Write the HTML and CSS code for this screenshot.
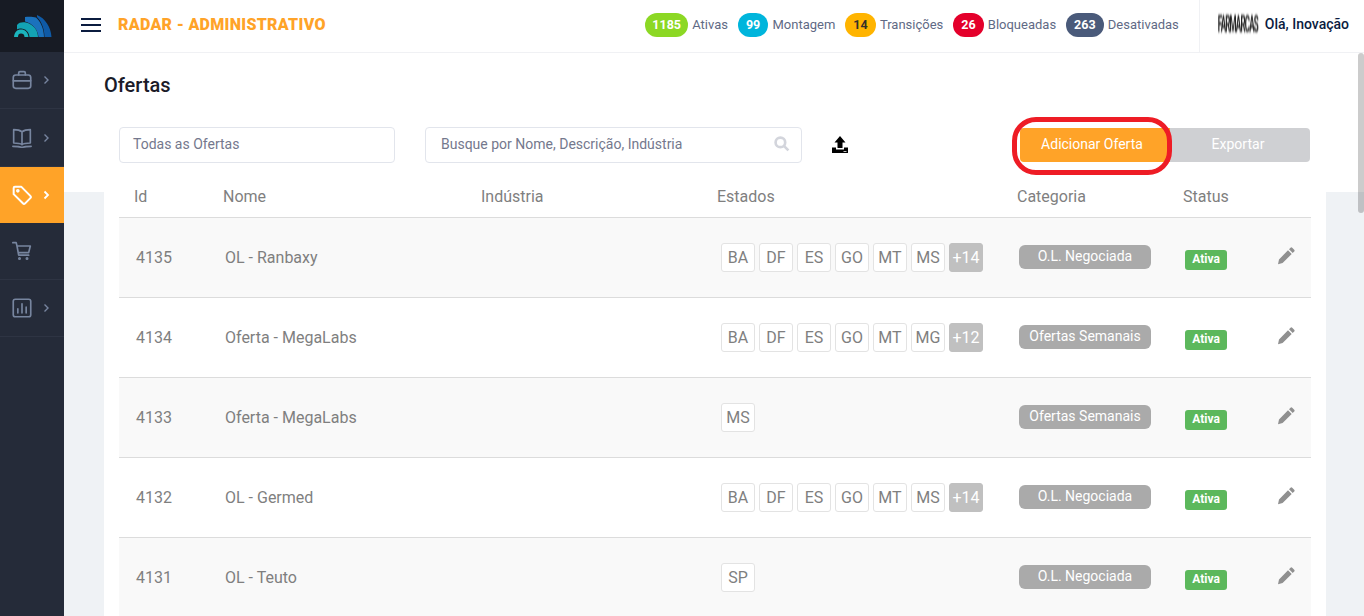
FILE: index.html
```html
<!DOCTYPE html>
<html lang="pt-BR">
<head>
    <meta charset="UTF-8">
    <meta name="viewport" content="width=device-width, initial-scale=1.0">
    <title>Radar - Administrativo</title>
    <link rel="stylesheet" href="styles.css">
</head>
<body>
    <div class="app">
        <!-- menu lateral -->
        <aside class="side_bar">
            <div class="side_logo">
                <svg width="38" height="23" viewBox="0 0 38 23">
                    <path d="M23 0C31 3 37 12 37.500 22H30.500C30.500 13 27 6 23 2Z" fill="#0f5aa6"/>
                    <path d="M11 2C14 1.500 19 1.500 22 2.500C26 6 30 13 30 22H24.500C24 15 19 8.500 11 6.500Z" fill="#1b72bd"/>
                    <path d="M3 10C5 7 9 7 12 7.500C19 9 24 15 24 22H15.500C15 17 11.500 13.500 7 13.500C5.500 13.500 4 13.800 3 14.500Z" fill="#13a3b4"/>
                    <path d="M0 22C.5 17 3 14.500 7 14.500C11 14.500 14 17 14.500 22H10.500C10.500 19.500 9 18.500 7 18.500C5 18.500 4 19.500 4 22Z" fill="#1bb5bd"/>
                </svg>
            </div>
            <a class="side_item">
                <svg class="side_icon" viewBox="0 0 24 24"><rect x="1.500" y="6" width="21" height="16" rx="3"/><path d="M8 6V3.500A1.500 1.500 0 0 1 9.500 2h5A1.500 1.500 0 0 1 16 3.500V6M1.500 13h21"/></svg>
                <svg class="side_arrow" viewBox="0 0 8 10"><path d="M2.500 1.500 6 5 2.500 8.500"/></svg>
            </a>
            <a class="side_item side_item_tall">
                <svg class="side_icon" viewBox="0 0 24 24"><path d="M12 4.500C10 3 6 2 2 2v16c4 0 8 .5 10 2 2-1.500 6-2 10-2V2c-4 0-8 1-10 2.500ZM12 4.500V20M1 22c4 0 8 0 11 1.500C15 22 19 22 23 22"/></svg>
                <svg class="side_arrow" viewBox="0 0 8 10"><path d="M2.500 1.500 6 5 2.500 8.500"/></svg>
            </a>
            <a class="side_item side_item_active">
                <svg class="side_icon" viewBox="0 0 24 24"><path d="M2 3.500A1.500 1.500 0 0 1 3.500 2H11l11 11a2 2 0 0 1 0 2.800L15.800 22a2 2 0 0 1-2.800 0L2 11Z"/><circle cx="7" cy="7" r="1"/></svg>
                <svg class="side_arrow" viewBox="0 0 8 10"><path d="M2.500 1.500 6 5 2.500 8.500"/></svg>
            </a>
            <a class="side_item">
                <svg class="side_icon" viewBox="0 0 24 24"><path d="M1 2h4l1 4 2 11h12M6 6h16l-2 8H7.500"/><circle cx="9" cy="21" r=".8"/><circle cx="18" cy="21" r=".8"/></svg>
            </a>
            <a class="side_item">
                <svg class="side_icon" viewBox="0 0 24 24"><rect x="1.500" y="1.500" width="21" height="21" rx="2.500"/><path d="M7 18v-5M12 18V7M17 18v-7"/></svg>
                <svg class="side_arrow" viewBox="0 0 8 10"><path d="M2.500 1.500 6 5 2.500 8.500"/></svg>
            </a>
        </aside>

        <div class="main_area">
            <!-- topo -->
            <header class="top_bar">
                <button class="menu_btn"><span></span><span></span><span></span></button>
                <h1 class="top_title">RADAR - ADMINISTRATIVO</h1>
                <div class="top_stats">
                    <span class="stat_num stat_green">1185</span><span class="stat_label">Ativas</span>
                    <span class="stat_num stat_blue">99</span><span class="stat_label">Montagem</span>
                    <span class="stat_num stat_yellow">14</span><span class="stat_label">Transições</span>
                    <span class="stat_num stat_red">26</span><span class="stat_label">Bloqueadas</span>
                    <span class="stat_num stat_navy">263</span><span class="stat_label">Desativadas</span>
                </div>
                <div class="top_user">
                    <span class="user_logo">FARMARCAS</span>
                    <span class="user_name">Olá, Inovação</span>
                </div>
            </header>

            <div class="content">
                <section class="card">
                    <h2 class="page_title">Ofertas</h2>
                    <div class="tool_bar">
                        <div class="field field_select">Todas as Ofertas</div>
                        <div class="field field_search">
                            <span>Busque por Nome, Descrição, Indústria</span>
                            <svg width="16" height="16" viewBox="0 0 15 15"><circle cx="6" cy="6" r="4.500"/><path d="M9.500 9.500 13.500 13.500"/></svg>
                        </div>
                        <svg class="upload_icon" width="18" height="18" viewBox="0 0 18 18"><path d="M9 0 14.500 6.500H11.500V12H6.500V6.500H3.500Z"/><path d="M1 11.500H5V13.500H13V11.500H17V17H1ZM12.500 15V15.800H15.500V15Z" fill-rule="evenodd"/></svg>
                        <div class="tool_btns">
                            <button class="btn btn_add">Adicionar Oferta<span class="btn_ring"></span></button>
                            <button class="btn btn_export">Exportar</button>
                        </div>
                    </div>

                    <table class="offer_table">
                        <colgroup>
                            <col class="col_id"><col class="col_name"><col class="col_ind"><col class="col_uf"><col class="col_cat"><col class="col_status"><col>
                        </colgroup>
                        <thead>
                            <tr><th>Id</th><th>Nome</th><th>Indústria</th><th>Estados</th><th>Categoria</th><th>Status</th><th></th></tr>
                        </thead>
                        <tbody>
                            <tr>
                                <td>4135</td><td>OL - Ranbaxy</td><td></td>
                                <td><div class="uf_list"><span class="uf">BA</span><span class="uf">DF</span><span class="uf">ES</span><span class="uf">GO</span><span class="uf">MT</span><span class="uf">MS</span><span class="uf uf_more">+14</span></div></td>
                                <td><span class="cat">O.L. Negociada</span></td>
                                <td><span class="status">Ativa</span></td>
                                <td><svg class="edit_icon" viewBox="0 0 18 18"><path d="M13.500.800a1.200 1.200 0 0 1 1.700 0l2 2a1.200 1.200 0 0 1 0 1.700L15.700 6 12 2.300ZM11 3.300 14.700 7 5.600 16.100 1 17.300 2 12.400Z"/></svg></td>
                            </tr>
                            <tr>
                                <td>4134</td><td>Oferta - MegaLabs</td><td></td>
                                <td><div class="uf_list"><span class="uf">BA</span><span class="uf">DF</span><span class="uf">ES</span><span class="uf">GO</span><span class="uf">MT</span><span class="uf">MG</span><span class="uf uf_more">+12</span></div></td>
                                <td><span class="cat">Ofertas Semanais</span></td>
                                <td><span class="status">Ativa</span></td>
                                <td><svg class="edit_icon" viewBox="0 0 18 18"><path d="M13.500.800a1.200 1.200 0 0 1 1.700 0l2 2a1.200 1.200 0 0 1 0 1.700L15.700 6 12 2.300ZM11 3.300 14.700 7 5.600 16.100 1 17.300 2 12.400Z"/></svg></td>
                            </tr>
                            <tr>
                                <td>4133</td><td>Oferta - MegaLabs</td><td></td>
                                <td><div class="uf_list"><span class="uf">MS</span></div></td>
                                <td><span class="cat">Ofertas Semanais</span></td>
                                <td><span class="status">Ativa</span></td>
                                <td><svg class="edit_icon" viewBox="0 0 18 18"><path d="M13.500.800a1.200 1.200 0 0 1 1.700 0l2 2a1.200 1.200 0 0 1 0 1.700L15.700 6 12 2.300ZM11 3.300 14.700 7 5.600 16.100 1 17.300 2 12.400Z"/></svg></td>
                            </tr>
                            <tr>
                                <td>4132</td><td>OL - Germed</td><td></td>
                                <td><div class="uf_list"><span class="uf">BA</span><span class="uf">DF</span><span class="uf">ES</span><span class="uf">GO</span><span class="uf">MT</span><span class="uf">MS</span><span class="uf uf_more">+14</span></div></td>
                                <td><span class="cat">O.L. Negociada</span></td>
                                <td><span class="status">Ativa</span></td>
                                <td><svg class="edit_icon" viewBox="0 0 18 18"><path d="M13.500.800a1.200 1.200 0 0 1 1.700 0l2 2a1.200 1.200 0 0 1 0 1.700L15.700 6 12 2.300ZM11 3.300 14.700 7 5.600 16.100 1 17.300 2 12.400Z"/></svg></td>
                            </tr>
                            <tr>
                                <td>4131</td><td>OL - Teuto</td><td></td>
                                <td><div class="uf_list"><span class="uf">SP</span></div></td>
                                <td><span class="cat">O.L. Negociada</span></td>
                                <td><span class="status">Ativa</span></td>
                                <td><svg class="edit_icon" viewBox="0 0 18 18"><path d="M13.500.800a1.200 1.200 0 0 1 1.700 0l2 2a1.200 1.200 0 0 1 0 1.700L15.700 6 12 2.300ZM11 3.300 14.700 7 5.600 16.100 1 17.300 2 12.400Z"/></svg></td>
                            </tr>
                        </tbody>
                    </table>
                </section>
            </div>
        </div>
    </div>
    <div class="scroll_thumb"></div>
</body>
</html>
```

FILE: styles.css
```css
html,body{
    margin:0;
    padding:0;
    height:100%;
    overflow:hidden;
    font-family:Roboto,"Liberation Sans",sans-serif;
    background:#fff;
}
.app{
    display:flex;
    height:100%;
}
/* menu lateral */
.side_bar{
    flex:none;
    width:64px;
    background:#252b39;
}
.side_logo{
    display:flex;
    align-items:center;
    justify-content:center;
    height:52px;
    background:#171b24;
}
.side_logo svg{
    margin:1px 0 0 1px;
}
.side_item{
    display:flex;
    align-items:center;
    box-sizing:border-box;
    height:57px;
    padding-left:12px;
    border-bottom:1px solid #2e3443;
}
.side_item_tall{
    height:58px;
}
.side_item_active{
    height:56px;
    background:#ffa328;
    border-bottom:0;
}
.side_icon{
    width:20px;
    height:20px;
    fill:none;
    stroke:#77859f;
    stroke-width:2;
    stroke-linejoin:round;
    stroke-linecap:round;
}
.side_arrow{
    width:8px;
    height:10px;
    margin-left:10px;
    fill:none;
    stroke:#77859f;
    stroke-width:1.400;
}
.side_item_active .side_icon,
.side_item_active .side_arrow{
    stroke:#fff;
}
.side_item_active .side_icon{
    stroke-width:2.400;
}
.side_item_active .side_arrow{
    stroke-width:1.800;
}
/* topo */
.main_area{
    flex:1;
    display:flex;
    flex-direction:column;
    min-width:0;
}
.top_bar{
    flex:none;
    display:flex;
    align-items:center;
    height:50px;
    padding:0 0 2px 17px;
    border-bottom:1px solid #f0f1f4;
}
.menu_btn{
    display:flex;
    flex-direction:column;
    gap:4px;
    margin:0 17px 0 0;
    padding:0;
    width:20px;
    border:0;
    background:none;
}
.menu_btn span{
    display:block;
    height:2px;
    background:#0b1c3f;
}
.top_title{
    margin:0;
    padding-bottom:2px;
    font-size:16px;
    font-weight:900;
    letter-spacing:.3px;
    color:#ffa328;
}
.top_stats{
    display:flex;
    align-items:center;
    margin-left:auto;
    font-size:13px;
}
.stat_num{
    box-sizing:border-box;
    height:24px;
    padding:0 8px;
    border-radius:12px;
    font-weight:700;
    font-size:12.500px;
    line-height:23px;
    text-align:center;
    color:#fff;
}
.stat_label{
    margin:0 10px 0 4.200px;
    padding-bottom:2px;
    color:#5f6a85;
}
.stat_label:last-child{
    margin-right:20px;
}
.stat_green{background:#8cd824;padding:0 7px;}
.stat_blue{background:#00b5dc;}
.stat_yellow{background:#ffb400;color:#33302a;}
.stat_red{background:#e4002b;}
.stat_navy{background:#4a5a7a;}
.top_user{
    display:flex;
    align-items:center;
    align-self:stretch;
    margin-bottom:-2px;
    padding:0 15px 4px 18px;
    border-left:1px solid #f0f1f4;
}
.user_logo{
    width:39px;
    margin-right:8px;
    white-space:nowrap;
    font-size:8px;
    font-weight:700;
    letter-spacing:-.8px;
    transform:scaleY(3);
    color:#222;
    filter:blur(.55px);
}
.user_name{
    font-size:14px;
    font-weight:500;
    color:#0b1c3f;
}
/* conteudo */
.content{
    flex:1;
    padding:0 38px 0 40px;
    background:linear-gradient(#fff 139px,#eff2f5 139px);
    overflow:hidden;
}
.card{
    box-sizing:border-box;
    height:100%;
    padding:0 15px;
    background:#fff;
}
.page_title{
    margin:0 0 0 -15px;
    padding-top:20px;
    font-size:20px;
    line-height:24px;
    font-weight:500;
    color:#1b1b28;
}
.tool_bar{
    display:flex;
    align-items:center;
    margin-top:30px;
    height:36px;
}
.field{
    display:flex;
    align-items:center;
    justify-content:space-between;
    box-sizing:border-box;
    height:36px;
    padding:0 14px 2px 13px;
    border:1px solid #e2e5ec;
    border-radius:4px;
    font-size:14px;
    color:#74788d;
}
.field_select{
    width:276px;
    margin-right:30px;
}
.field_search{
    width:377px;
    padding-left:15px;
    padding-right:11px;
}
.field_search svg{
    fill:none;
    stroke:#d3d5dc;
    stroke-width:2.500;
}
.upload_icon{
    margin-left:29px;
}
.tool_btns{
    display:flex;
    margin-left:auto;
    margin-right:1px;
}
.btn{
    height:34px;
    padding:0 6px 2px 0;
    border:0;
    border-radius:0 4px 4px 0;
    font-family:inherit;
    font-size:14px;
    color:#fff;
}
.btn_add{
    position:relative;
    width:150px;
    background:#ffa328;
    border-radius:4px 0 0 4px;
}
.btn_export{
    width:140px;
    padding-right:4px;
    background:#cfd0d3;
}
/* contorno vermelho em volta do botao */
.btn_ring{
    position:absolute;
    left:-8px;
    top:-11px;
    width:160px;
    height:58px;
    box-sizing:border-box;
    border:5px solid #ee1c25;
    border-radius:24px;
}
/* tabela */
.offer_table{
    width:100%;
    margin-top:15px;
    border-collapse:collapse;
    table-layout:fixed;
    font-size:16px;
    color:#7f7f7f;
}
.col_id{width:89px;}
.col_name{width:258px;}
.col_ind{width:236px;}
.col_uf{width:300px;}
.col_cat{width:166px;}
.col_status{width:92px;}
.offer_table th{
    height:37px;
    padding:0 0 2px 15px;
    border-bottom:1px solid #dcdcdc;
    font-weight:400;
    text-align:left;
}
.offer_table td{
    height:79px;
    padding:0 0 0 17px;
    border-bottom:1px solid #dcdcdc;
}
.offer_table tbody tr:nth-child(odd){
    background:#f9f9f9;
}
.uf_list{
    display:flex;
    gap:4px;
    margin-left:2px;
}
.uf{
    box-sizing:border-box;
    width:34px;
    height:29px;
    border:1px solid #e3e3e3;
    border-radius:3px;
    background:#fff;
    line-height:27px;
    text-align:center;
}
.uf_more{
    border-color:#c0c0c0;
    background:#c0c0c0;
    color:#fff;
}
.cat{
    display:block;
    width:132px;
    height:24px;
    margin-bottom:2px;
    border-radius:6px;
    background:#aaa;
    font-size:14px;
    line-height:22px;
    text-align:center;
    color:#fff;
}
.status{
    display:block;
    width:42px;
    height:20px;
    margin-top:5px;
    border-radius:3px;
    background:#5cb85c;
    font-size:12px;
    font-weight:700;
    line-height:18px;
    text-align:center;
    color:#fff;
}
.edit_icon{
    display:block;
    width:18px;
    height:18px;
    margin:-4px 0 0 0;
    fill:#909090;
}
.scroll_thumb{
    position:fixed;
    right:0;
    top:53px;
    width:6px;
    height:160px;
    border-radius:3px;
    background:rgba(0,0,0,.2);
}
```
